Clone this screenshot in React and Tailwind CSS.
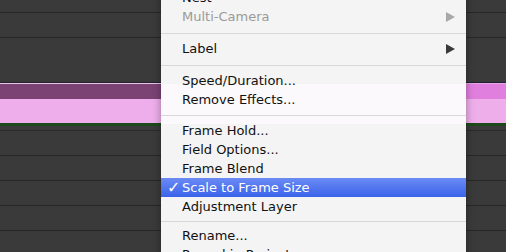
import React from 'react';

const Item = ({ label, disabled, checked, highlighted, submenu }) => (
  <div
    className={`relative flex items-center h-[19px] pl-[6px] pr-[11px] ${
      highlighted ? 'bg-[linear-gradient(to_bottom,#6b8af4,#3a63ea)] text-white' : disabled ? 'text-[#9a9a9a]' : 'text-[#111]'
    }`}
  >
    <span className="w-[15px] text-[16px] font-bold leading-none">{checked ? '✓' : ''}</span>
    <span className="flex-1 text-[13px] leading-none">{label}</span>
    {submenu && (
      <svg width="9" height="10" viewBox="0 0 9 10">
        <path d="M0 0 L9 5 L0 10 Z" fill={disabled ? '#a8a8a8' : '#3a3a3a'} />
      </svg>
    )}
  </div>
);

const Sep = ({ pad = 'pt-[7px] pb-[5px]' }) => (
  <div className={pad}>
    <div className="h-px bg-[#d8d8d8]" />
  </div>
);

const Band = ({ h, left, right }) => (
  <div className={`flex ${h}`}>
    <div className={`w-[466px] ${left}`} />
    <div className={`flex-1 ${right}`} />
  </div>
);

export default function App() {
  return (
    <div className="relative w-[506px] h-[252px] overflow-hidden bg-[#3a3a3a] font-['DejaVu_Sans',sans-serif]">
      {/* timeline tracks */}
      <div className="flex flex-col">
        <div className="h-[13px] border-b border-[#272727]" />
        <div className="h-[25px] border-b border-[#272727]" />
        <div className="h-[45px] border-b border-[#1f2030]" />
        <Band h="h-px" left="bg-[#e9c6e6]" right="bg-[#e9a6e6]" />
        <Band h="h-[15px]" left="bg-[#7a4374]" right="bg-[#e17fde]" />
        <Band h="h-[24px]" left="bg-[#eeadeb]" right="bg-[#eeaeea]" />
        <div className="h-[3px] bg-[#1d4a1c]" />
        <div className="h-[5px] border-b border-[#2b2b2b]" />
        <div className="h-[25px] border-b border-[#272727]" />
        <div className="h-[25px] border-b border-[#272727]" />
        <div className="h-[25px] border-b border-[#272727]" />
        <div className="h-[25px] border-b border-[#272727]" />
        <div className="h-[25px]" />
      </div>

      {/* context menu */}
      <div className="absolute left-[161px] top-[-12px] w-[305px] pb-4 shadow-[0_0_8px_rgba(0,0,0,0.35)] bg-[linear-gradient(to_bottom,#f4f4f4_96px,#fbf9fb_96px,#fbf9fb_136px,#f4f4f4_136px)]">
        <Item label="Nest" />
        <Item label="Multi-Camera" disabled submenu />
        <Sep />
        <Item label="Label" submenu />
        <Sep />
        <Item label="Speed/Duration..." />
        <Item label="Remove Effects..." />
        <Sep pad="pt-[6px] pb-[5px]" />
        <Item label="Frame Hold..." />
        <Item label="Field Options..." />
        <Item label="Frame Blend" />
        <Item label="Scale to Frame Size" checked highlighted />
        <Item label="Adjustment Layer" />
        <Sep pad="pt-[5px] pb-[4px]" />
        <Item label="Rename..." />
        <Item label="Reveal in Project" />
      </div>
    </div>
  );
}
